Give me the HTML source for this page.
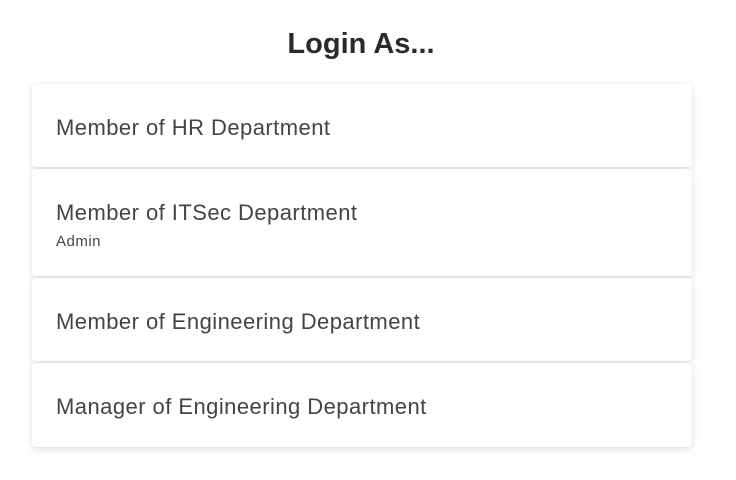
<!DOCTYPE html>
<html><head><style>
body{margin:0;width:736px;height:480px;background:#fff;font-family:"Liberation Sans",sans-serif;color:#3a3a3a;}
h1{position:absolute;top:26px;left:-13px;width:748px;text-align:center;margin:0;font-size:29px;font-weight:bold;color:#2a2a2a;line-height:36px;letter-spacing:0;}
.c{position:absolute;left:32px;width:660px;background:#fff;border-radius:4px;box-shadow:0 2px 8px rgba(0,0,0,0.12),0 0 1px rgba(0,0,0,0.1);box-sizing:border-box;}
.t{font-size:22px;letter-spacing:0.45px;color:#444;position:absolute;left:24px;line-height:24px;white-space:nowrap;}
.s{font-size:15px;letter-spacing:0.5px;color:#444;position:absolute;left:24px;}
</style></head><body>
<h1>Login As...</h1>
<div class="c" style="top:84px;height:83px"><div class="t" style="top:32px">Member of HR Department</div></div>
<div class="c" style="top:169px;height:107px"><div class="t" style="top:32px">Member of ITSec Department</div><div class="s" style="top:64px">Admin</div></div>
<div class="c" style="top:278px;height:83px"><div class="t" style="top:32px">Member of Engineering Department</div></div>
<div class="c" style="top:363px;height:84px"><div class="t" style="top:32px">Manager of Engineering Department</div></div>
</body></html>
